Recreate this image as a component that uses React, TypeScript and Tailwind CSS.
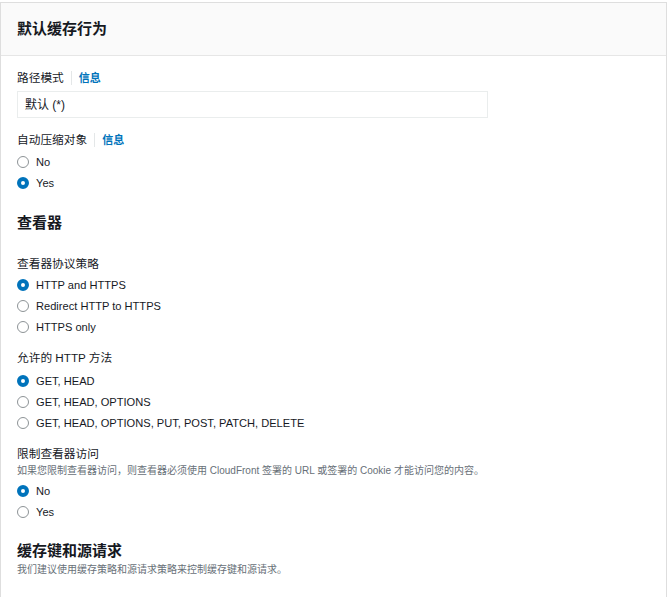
import React from "react";

const FONT = '"Liberation Sans", "Noto Sans CJK SC", sans-serif';

function Radio({ label, checked }: { label: string; checked?: boolean }) {
  return (
    <div className="flex h-[21.3px] items-center">
      {checked ? (
        <span className="box-border h-[12px] w-[12px] rounded-full border-[4px] border-[#0073bb] bg-white" />
      ) : (
        <span className="box-border h-[12px] w-[12px] rounded-full border border-[#8d9396] bg-white" />
      )}
      <span className="ml-[7px] text-[11.1px] leading-[14px] text-[#16191f]">{label}</span>
    </div>
  );
}

function Label({ text, info }: { text: string; info?: boolean }) {
  return (
    <div className="flex h-[16px] items-center text-[11.7px] leading-[16px] text-[#16191f]">
      <span>{text}</span>
      {info && (
        <>
          <span className="mx-[7px] h-[14px] w-px bg-[#e4e7e8]" />
          <span className="text-[11px] font-bold text-[#0073bb]">信息</span>
        </>
      )}
    </div>
  );
}

export default function App() {
  return (
    <div className="h-[597px] w-[669px] overflow-hidden bg-white pt-[2px]" style={{ fontFamily: FONT }}>
      <div className="h-[620px] w-[667px] border-l border-r border-t border-[#dedede]">
        <div className="flex h-[53px] items-center border-b border-[#e6e6e6] bg-[#fafafa] pl-[16px]">
          <h1 className="text-[15px] font-bold leading-[20px] text-[#16191f]">默认缓存行为</h1>
        </div>
        <div className="pl-[16px] pt-[14px]">
          <Label text="路径模式" info />
          <div className="mt-[5px] flex h-[27px] w-[471px] items-center border border-[#eaeded] px-[7px] text-[12px] text-[#16191f]">
            默认 (*)
          </div>

          <div className="mt-[14px]">
            <Label text="自动压缩对象" info />
          </div>
          <div className="mt-[3px]">
            <Radio label="No" />
            <Radio label="Yes" checked />
          </div>

          <h2 className="mt-[19px] text-[15px] font-bold leading-[20px] text-[#16191f]">查看器</h2>

          <div className="mt-[23px]">
            <Label text="查看器协议策略" />
          </div>
          <div className="mt-[2.5px]">
            <Radio label="HTTP and HTTPS" checked />
            <Radio label="Redirect HTTP to HTTPS" />
            <Radio label="HTTPS only" />
          </div>

          <div className="mt-[12px]">
            <Label text="允许的 HTTP 方法" />
          </div>
          <div className="mt-[4px]">
            <Radio label="GET, HEAD" checked />
            <Radio label="GET, HEAD, OPTIONS" />
            <Radio label="GET, HEAD, OPTIONS, PUT, POST, PATCH, DELETE" />
          </div>

          <div className="mt-[12px]">
            <Label text="限制查看器访问" />
          </div>
          <p className="mt-[2px] text-[10px] leading-[14px] text-[#687078]">
            如果您限制查看器访问，则查看器必须使用 CloudFront 签署的 URL 或签署的 Cookie 才能访问您的内容。
          </p>
          <div className="mt-[2.5px]">
            <Radio label="No" checked />
            <Radio label="Yes" />
          </div>

          <h2 className="mt-[18.5px] text-[15px] font-bold leading-[20px] text-[#16191f]">缓存键和源请求</h2>
          <p className="mt-[2px] text-[10px] leading-[14px] text-[#687078]">
            我们建议使用缓存策略和源请求策略来控制缓存键和源请求。
          </p>
        </div>
      </div>
    </div>
  );
}
